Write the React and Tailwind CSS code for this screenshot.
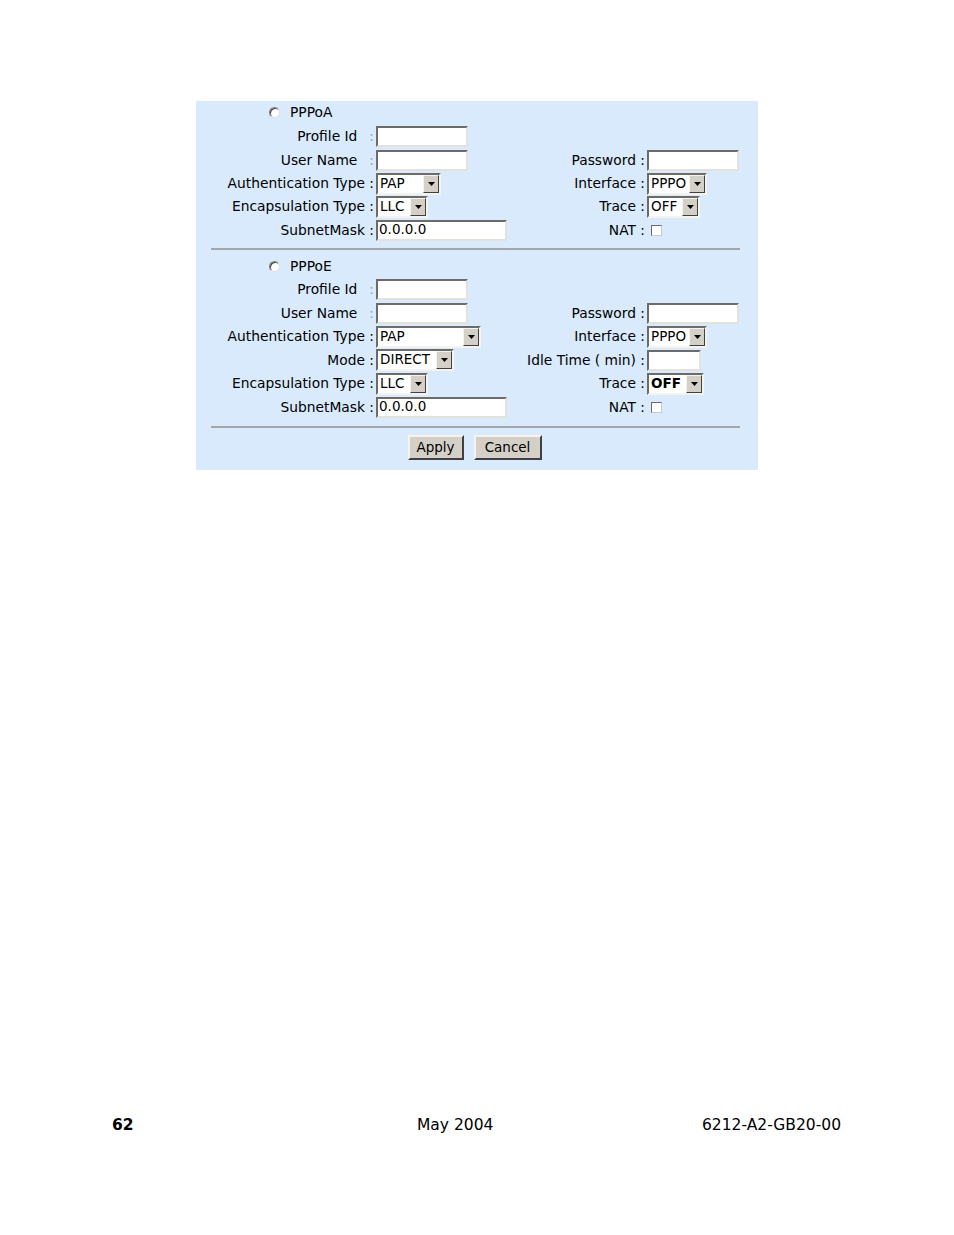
import React from 'react'

const font = { fontFamily: '"DejaVu Sans", Verdana, sans-serif' }

function TextBox({ w, value = '' }) {
    return (
        <div
            className={`${w} h-[21px] bg-white border-2 border-t-[#6b6b6b] border-l-[#6b6b6b] border-b-[#e4e1da] border-r-[#e4e1da] flex items-center px-[1px] text-[13.5px] leading-none`}
        >
            {value}
        </div>
    )
}

function Select({ w, value, bold }) {
    return (
        <div
            className={`${w} h-[22px] bg-white border-2 border-t-[#6b6b6b] border-l-[#6b6b6b] border-b-[#f4f3ee] border-r-[#f4f3ee] flex items-stretch`}
        >
            <div className={`flex-1 flex items-center pl-[2px] text-[13.5px] leading-none ${bold ? 'font-bold' : ''}`}>
                {value}
            </div>
            <div className="w-[16px] bg-[#d4d0c8] border border-t-[#f4f3ee] border-l-[#f4f3ee] border-b-[#404040] border-r-[#404040] flex items-center justify-center">
                <svg width="7" height="4" viewBox="0 0 7 4">
                    <path d="M0 0h7L3.5 4z" fill="#000" />
                </svg>
            </div>
        </div>
    )
}

function Radio() {
    return (
        <span className="inline-block w-[11px] h-[11px] rounded-full bg-white border border-t-[#808080] border-l-[#808080] border-b-[#e0e0e0] border-r-[#e0e0e0] shadow-[inset_1px_1px_0_#404040]" />
    )
}

function Checkbox() {
    return (
        <span className="inline-block w-[11px] h-[11px] bg-white border border-t-[#6b6b6b] border-l-[#6b6b6b] border-b-[#c8c8c8] border-r-[#c8c8c8]" />
    )
}

function Label({ text, faint }) {
    return (
        <div className="flex items-center justify-end pr-[2px] whitespace-nowrap">
            {faint ? (
                <>
                    <span>{text}</span>
                    <span className="ml-[12px] text-[#9aa4b0]">:</span>
                </>
            ) : (
                <span>{text} :</span>
            )}
        </div>
    )
}

function Row({ h = 'h-[24px]', left, leftCtl, right, rightCtl, faint }) {
    return (
        <div className={`grid grid-cols-[180px_145px_126px_1fr] ${h}`}>
            {left ? <Label text={left} faint={faint} /> : <div />}
            <div className="flex items-center">{leftCtl}</div>
            {right ? <Label text={right} /> : <div />}
            <div className="flex items-center">{rightCtl}</div>
        </div>
    )
}

function Heading({ text, h = 'h-[23px]' }) {
    return (
        <div className={`${h} flex items-center pl-[73px]`}>
            <Radio />
            <span className="ml-[10px]">{text}</span>
        </div>
    )
}

function Rule() {
    return <div className="mr-[18px] ml-[15px] h-[2px] bg-[#a3a6aa]" />
}

function Btn({ w, children }) {
    return (
        <button
            className={`${w} h-[25px] bg-[#d4d0c8] border-2 border-t-[#f4f3ee] border-l-[#f4f3ee] border-b-[#404040] border-r-[#404040] text-[13.5px] leading-none`}
        >
            {children}
        </button>
    )
}

export default function App() {
    return (
        <div className="w-[954px] h-[1235px] bg-white relative" style={font}>
            <div className="pt-[101px] flex justify-center">
                <div className="w-[562px] bg-[#d9eafc] text-[13.8px] text-black pb-[10px]">
                    <Heading text="PPPoA" />
                    <Row left="Profile Id" faint leftCtl={<TextBox w="w-[92px]" />} />
                    <Row
                        left="User Name"
                        faint
                        leftCtl={<TextBox w="w-[92px]" />}
                        right="Password"
                        rightCtl={<TextBox w="w-[92px]" />}
                    />
                    <Row
                        h="h-[23px]"
                        left="Authentication Type"
                        leftCtl={<Select w="w-[65px]" value="PAP" />}
                        right="Interface"
                        rightCtl={<Select w="w-[60px]" value="PPPO" />}
                    />
                    <Row
                        h="h-[23px]"
                        left="Encapsulation Type"
                        leftCtl={<Select w="w-[52px]" value="LLC" />}
                        right="Trace"
                        rightCtl={<Select w="w-[53px]" value="OFF" />}
                    />
                    <Row
                        left="SubnetMask"
                        leftCtl={<TextBox w="w-[131px]" value="0.0.0.0" />}
                        right="NAT"
                        rightCtl={<span className="ml-[4px] flex"><Checkbox /></span>}
                    />
                    <div className="h-[6px]" />
                    <Rule />
                    <div className="h-[5px]" />
                    <Heading text="PPPoE" h="h-[22px]" />
                    <Row left="Profile Id" faint leftCtl={<TextBox w="w-[92px]" />} />
                    <Row
                        left="User Name"
                        faint
                        leftCtl={<TextBox w="w-[92px]" />}
                        right="Password"
                        rightCtl={<TextBox w="w-[92px]" />}
                    />
                    <Row
                        h="h-[23px]"
                        left="Authentication Type"
                        leftCtl={<Select w="w-[105px]" value="PAP" />}
                        right="Interface"
                        rightCtl={<Select w="w-[60px]" value="PPPO" />}
                    />
                    <Row
                        left="Mode"
                        leftCtl={<Select w="w-[78px]" value="DIRECT" />}
                        right="Idle Time ( min)"
                        rightCtl={<TextBox w="w-[54px]" />}
                    />
                    <Row
                        h="h-[23px]"
                        left="Encapsulation Type"
                        leftCtl={<Select w="w-[52px]" value="LLC" />}
                        right="Trace"
                        rightCtl={<Select w="w-[57px]" value="OFF" bold />}
                    />
                    <Row
                        left="SubnetMask"
                        leftCtl={<TextBox w="w-[131px]" value="0.0.0.0" />}
                        right="NAT"
                        rightCtl={<span className="ml-[4px] flex"><Checkbox /></span>}
                    />
                    <div className="h-[7px]" />
                    <Rule />
                    <div className="flex justify-center gap-[10px] pt-[7px] pr-[5px]">
                        <Btn w="w-[56px]">Apply</Btn>
                        <Btn w="w-[68px]">Cancel</Btn>
                    </div>
                </div>
            </div>
            <div className="absolute left-[112px] right-[113px] top-[1118px] flex items-center text-[15.5px] leading-none">
                <span className="w-[305px] font-bold">62</span>
                <span>May 2004</span>
                <span className="ml-auto">6212-A2-GB20-00</span>
            </div>
        </div>
    )
}
